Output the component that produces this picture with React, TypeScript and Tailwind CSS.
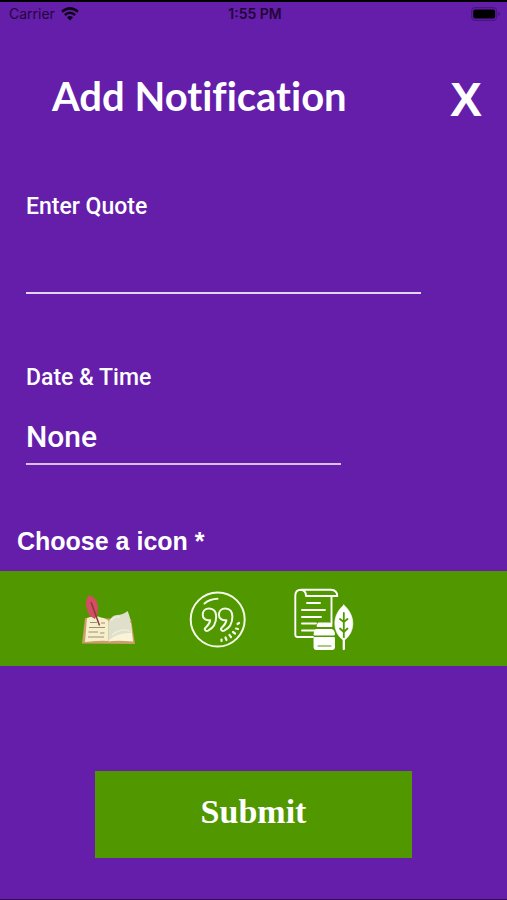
import { useState } from "react";

function WifiIcon() {
  return (
    <svg viewBox="0 0 18 14" className="h-[14px] w-[18px]" fill="none" stroke="#0d0418" aria-hidden="true">
      <path d="M1 4.8Q9-2 17 4.8" strokeWidth="2.5" />
      <path d="M3.8 8Q9 3.6 14.2 8" strokeWidth="2.3" />
      <path d="M6 10.2Q9 7.6 12 10.2L9 13.6Z" fill="#0d0418" stroke="none" />
    </svg>
  );
}

function BatteryIcon() {
  return (
    <svg viewBox="0 0 30 14" className="h-[14px] w-[30px]" aria-hidden="true">
      <rect x="0.7" y="0.7" width="25" height="12.6" rx="3.6" fill="none" stroke="#491480" strokeWidth="1.2" />
      <rect x="2.2" y="2.6" width="22" height="8.8" rx="2" fill="#000" />
      <path d="M27.3 4.8Q29 5.4 29 7T27.3 9.2Z" fill="#491480" />
    </svg>
  );
}

function BookIcon() {
  return (
    <svg viewBox="0 0 80 80" className="size-20" aria-hidden="true">
      <path d="M15 38 12 63.5 65 64 61 39Z" fill="#c9a06c" />
      <path d="M17 38Q25 35 31 37.5Q36 38 38.5 41L38.5 61Q32 60 15 62Z" fill="#f7efcb" />
      <path d="M38.5 61.5Q46 60 63 61.5L61 43 39 44Z" fill="#fbf3d7" />
      <path d="M38.5 42Q42 35 47 35Q53 35 57.5 31Q59 34 60 38L61.5 53Q49 52 39 60Z" fill="#dfdfcc" />
      <path d="M41 41Q44 36 50 37M42 55Q51 48 60 51" fill="none" stroke="#eeecda" strokeWidth="1.5" />
      <path d="M20 42.5H27M31 43H35M19 47.5H35M18.5 52H28M30 53H34.5M18 57H34" fill="none" stroke="#9c9074" strokeWidth="1" />
      <path d="M38.5 42V61" stroke="#d8d0b0" strokeWidth="1" />
      <path d="M19 15Q14 21 17 29Q18 36 25 39Q30 31 27 22Q25 17 19 15Z" fill="#d34e60" />
      <path d="M21 22 29.5 45.5" stroke="#873844" strokeWidth="1.5" fill="none" />
    </svg>
  );
}

function QuoteIcon() {
  return (
    <svg viewBox="-2 0 80 80" className="size-20" fill="none" stroke="#f2fbe5" strokeWidth="2" strokeLinecap="round" strokeLinejoin="round" aria-hidden="true">
      <circle cx="37.7" cy="39.5" r="27" />
      <path d="M24.5 23.5Q30 19 37.5 18.8" />
      <path d="M29.2 28.5C24.8 28.5 22.7 31.5 22.7 34.8C22.7 38.7 26 40.7 30.2 40.2C29.8 43.3 28.3 45.4 26 47.2C23.6 49 25.3 52 28.1 50.7C34 47.8 36.2 42.5 36.2 36.6C36.2 31.6 33.7 28.5 29.2 28.5Z" />
      <path d="M45.4 28.5C41 28.5 38.9 31.5 38.9 34.8C38.9 38.7 42.2 40.7 46.4 40.2C46 43.3 44.5 45.4 42.2 47.2C39.8 49 41.5 52 44.3 50.7C50.2 47.8 52.4 42.5 52.4 36.6C52.4 31.6 49.9 28.5 45.4 28.5Z" />
      <path d="M57.5 44 59 43M56 48.5 58 49M53 52 55 53.5M49.5 55 51 57.2M45.5 57.5 46.5 60M41.5 59.5V61" strokeWidth="2.2" />
    </svg>
  );
}

function ScrollIcon() {
  return (
    <svg viewBox="1 0 80 80" className="size-20" fill="none" stroke="#fff" strokeWidth="1.9" strokeLinecap="round" strokeLinejoin="round" aria-hidden="true">
      <path d="M28 57H12.5Q10.3 57 10.3 54.5V16Q10.3 9.8 16 9.8H46Q52 10 52.3 16H21Q20.8 10 16 9.8" />
      <path d="M46.5 17V44" />
      <path d="M22 23H35M17 30H40M17 37H36M17 43.5H31M17 50.5H30" />
      <path d="M33.5 43.5H44Q46.5 43.5 46.5 46H32.5Z" fill="#fff" />
      <path d="M31 50H46.5Q49 51 49 54.5H29.5Q29.5 51 31 50Z" fill="#fff" />
      <path d="M29.5 58H49V67.5Q49 69 47.5 69H31Q29.5 69 29.5 67.5Z" fill="#fff" />
      <path d="M33 66H46" stroke="#519700" strokeWidth="1" />
      <path d="M58.8 25C53.5 29.5 49.8 36 49.8 43.5C49.8 51 53.5 57 58.8 60.5C64 57 67.8 51 67.8 43.5C67.8 36 64 29.5 58.8 25Z" fill="#fff" strokeWidth="0.6" />
      <path d="M58.8 33V61M55 39 58.8 42 62.5 39M55 48.5 58.8 52 62.5 48.5" stroke="#519700" strokeWidth="1.8" />
      <path d="M58.8 59V69" strokeWidth="2.3" />
    </svg>
  );
}

const icons = [
  { name: "Book", Icon: BookIcon },
  { name: "Quote", Icon: QuoteIcon },
  { name: "Scroll", Icon: ScrollIcon },
];

export default function App() {
  const [quote, setQuote] = useState("");
  const [date, setDate] = useState("None");

  return (
    <main className="flex min-h-screen flex-col border-t-2 border-b border-t-black border-b-[#321052] bg-[#641eaa] font-['Liberation_Sans',sans-serif] text-white">
      <div className="grid h-6 grid-cols-3 items-center pr-[6px] pl-[9px] font-['Inter',sans-serif] text-sm text-[#220638]">
        <div className="flex items-center gap-[6px]">
          <span>Carrier</span>
          <WifiIcon />
        </div>
        <span className="text-center font-semibold">1:55 PM</span>
        <div className="flex justify-end">
          <BatteryIcon />
        </div>
      </div>

      <header className="mt-[44px] flex h-[60px] items-start justify-between pr-[25px] pl-[52px]">
        <h1 className="font-['Lato',sans-serif] text-[40px] leading-[52px] font-bold [font-variant-ligatures:none]">Add Notification</h1>
        <button type="button" aria-label="Close" className="text-[48px] leading-[60px] font-bold">X</button>
      </header>

      <form className="flex flex-col" onSubmit={(event) => event.preventDefault()}>
        <div className="mt-[62px] flex flex-col px-[26px] font-['Roboto',sans-serif] font-medium">
          <label htmlFor="quote" className="text-[23px] leading-[30px]">Enter Quote</label>
          <input
            id="quote"
            type="text"
            value={quote}
            onChange={(event) => setQuote(event.target.value)}
            className="mt-[22px] h-[50px] w-full max-w-[395px] border-b-2 border-[#e6d2f5] bg-transparent text-[30px] outline-none"
          />
        </div>

        <div className="mt-[69px] flex flex-col px-[26px] font-['Roboto',sans-serif] font-medium">
          <label htmlFor="date" className="text-[23px] leading-[30px]">Date &amp; Time</label>
          <input
            id="date"
            type="text"
            value={date}
            onChange={(event) => setDate(event.target.value)}
            className="mt-[22px] h-[50px] w-full max-w-[315px] border-b-2 border-[#dcbef0] bg-transparent pb-[6px] text-[30px] outline-none"
          />
        </div>

        <h2 id="icon-heading" className="mt-[60px] pl-[17px] text-[25px] leading-[32px] font-bold">Choose a icon *</h2>
        <div role="group" aria-labelledby="icon-heading" className="mt-[14px] flex h-[95px] items-center gap-7 bg-[#519700] pt-[2px] pl-[70px]">
          {icons.map(({ name, Icon }) => (
            <button key={name} type="button" aria-label={name}>
              <Icon />
            </button>
          ))}
        </div>

        <button type="submit" className="mx-auto mt-[105px] mb-[40px] h-[87px] w-5/8 bg-[#519700] pb-[6px] font-['Liberation_Serif',serif] text-[34px] font-bold">
          Submit
        </button>
      </form>
    </main>
  );
}
